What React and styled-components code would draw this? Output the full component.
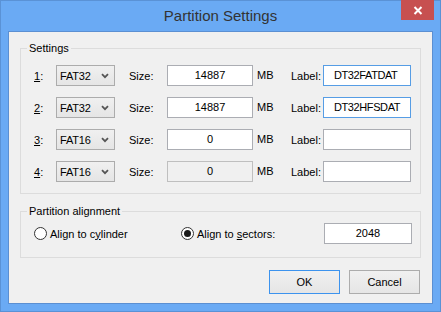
import React from 'react';
import styled, { createGlobalStyle } from 'styled-components';

const GlobalStyle = createGlobalStyle`
  html, body {
    margin: 0;
    padding: 0;
    background: #ffffff;
  }
  body {
    font-family: "Liberation Sans", Arial, sans-serif;
    font-size: 11px;
    color: #000;
  }
`;

const partitions = [
  { id: '1', fs: 'FAT32', size: '14887', label: 'DT32FATDAT', active: true },
  { id: '2', fs: 'FAT32', size: '14887', label: 'DT32HFSDAT', active: true },
  { id: '3', fs: 'FAT16', size: '0', label: '' },
  { id: '4', fs: 'FAT16', size: '0', label: '', disabled: true },
];

const Chevron = () => (
  <svg width="8" height="6" viewBox="0 0 8 6">
    <path d="M1 1.2 L4 4.2 L7 1.2" fill="none" stroke="#555" strokeWidth="1.8" />
  </svg>
);

const CloseGlyph = () => (
  <svg width="10" height="9" viewBox="0 0 10 9">
    <path d="M1.5 1 L8.5 8 M8.5 1 L1.5 8" stroke="#fff" strokeWidth="2" />
  </svg>
);

const App = () => (
  <>
    <GlobalStyle />
    <Window>
      <TitleBar>
        <span />
        <Title>Partition Settings</Title>
        <CloseCell>
          <CloseButton>
            <CloseGlyph />
          </CloseButton>
        </CloseCell>
      </TitleBar>
      <Client>
        <Group $pt="10px" $pb="11px">
          <Legend>Settings</Legend>
          <Rows>
            {partitions.map((p) => (
              <Row key={p.id}>
                <Cell $w="22px">
                  <u>{p.id}</u>:
                </Cell>
                <Combo>
                  <span>{p.fs}</span>
                  <Chevron />
                </Combo>
                <Cell $w="38px" $ml="14px">Size:</Cell>
                <Field $w="86px" $align="center" $disabled={p.disabled}>
                  {p.size}
                </Field>
                <Cell $w="34px" $ml="4px" $up>MB</Cell>
                <Cell $w="32px">Label:</Cell>
                <Field $w="88px" $active={p.active} $tight>
                  {p.label}
                </Field>
              </Row>
            ))}
          </Rows>
        </Group>
        <Group $pt="5px" $pb="13px" $mt="11px">
          <Legend>Partition alignment</Legend>
          <AlignRow>
            <Radio $w="147px">
              <RadioDot />
              <span>
                Align to c<u>y</u>linder
              </span>
            </Radio>
            <Radio $w="143px">
              <RadioDot $checked />
              <span>
                Align to <u>s</u>ectors:
              </span>
            </Radio>
            <Field $w="88px" $align="center">2048</Field>
          </AlignRow>
        </Group>
        <Buttons>
          <Button $default>OK</Button>
          <Button>Cancel</Button>
        </Buttons>
      </Client>
    </Window>
  </>
);

export default App;

const Window = styled.div`
  width: 441px;
  height: 312px;
  box-sizing: border-box;
  background: #6aaaf4;
  border: 1px solid #5a92d6;
  display: flex;
  flex-direction: column;
`;

const TitleBar = styled.div`
  height: 30px;
  display: grid;
  grid-template-columns: 1fr auto 1fr;
  align-items: start;
`;

const Title = styled.div`
  font-family: "Segoe UI", "Liberation Sans", Arial, sans-serif;
  font-size: 15px;
  color: #333;
  padding-top: 6px;
`;

const CloseCell = styled.div`
  display: flex;
  justify-content: flex-end;
  padding-right: 6px;
`;

const CloseButton = styled.div`
  width: 33px;
  height: 20px;
  margin-top: -1px;
  background: #c75050;
  display: flex;
  align-items: center;
  justify-content: center;
`;

const Client = styled.div`
  flex: 1;
  margin: 0 7px 7px 7px;
  background: #f0f0f0;
  border: 1px solid #5b8fd2;
  padding: 10px 11px 0 11px;
  display: flex;
  flex-direction: column;
`;

const Group = styled.fieldset`
  margin: ${({ $mt }) => $mt || '0'} 0 0 0;
  padding: ${({ $pt }) => $pt} 0 ${({ $pb }) => $pb} 13px;
  border: 1px solid #dcdcdc;
  min-width: 0;
`;

const Legend = styled.legend`
  margin-left: -7px;
  padding: 0 2px;
  line-height: 13px;
`;

const Rows = styled.div`
  display: flex;
  flex-direction: column;
  gap: 11px;
`;

const Row = styled.div`
  display: flex;
  align-items: center;
  height: 21px;
`;

const Cell = styled.div`
  width: ${({ $w }) => $w};
  margin-left: ${({ $ml }) => $ml || '0'};
  flex-shrink: 0;
  position: relative;
  top: ${({ $up }) => ($up ? '-1px' : '0')};
`;

const Combo = styled.div`
  width: 59px;
  height: 21px;
  box-sizing: border-box;
  border: 1px solid #acacac;
  background: linear-gradient(#f0f0f0, #e5e5e5);
  display: flex;
  align-items: center;
  justify-content: space-between;
  padding: 0 5px 0 3px;
  letter-spacing: -0.2px;
`;

const Field = styled.div`
  width: ${({ $w }) => $w};
  height: 21px;
  box-sizing: border-box;
  flex-shrink: 0;
  border: 1px solid
    ${({ $active, $disabled }) => ($active ? '#569de5' : $disabled ? '#bfbfbf' : '#abadb3')};
  background: ${({ $disabled }) => ($disabled ? '#f0f0f0' : '#fff')};
  display: flex;
  align-items: center;
  justify-content: ${({ $align }) => ($align === 'center' ? 'center' : 'flex-start')};
  padding: 0 0 0 ${({ $tight }) => ($tight ? '10px' : '0')};
  letter-spacing: ${({ $tight }) => ($tight ? '-0.4px' : '0')};
  line-height: 1;
`;

const AlignRow = styled.div`
  display: flex;
  align-items: center;
  height: 21px;
`;

const Radio = styled.div`
  width: ${({ $w }) => $w};
  display: flex;
  align-items: center;
  gap: 3px;
`;

const RadioDot = styled.span`
  width: 13px;
  height: 13px;
  box-sizing: border-box;
  border-radius: 50%;
  border: 1px solid #333;
  background: #fff;
  display: flex;
  align-items: center;
  justify-content: center;

  &::after {
    content: '';
    display: ${({ $checked }) => ($checked ? 'block' : 'none')};
    width: 7px;
    height: 7px;
    border-radius: 50%;
    background: #1a1a1a;
  }
`;

const Buttons = styled.div`
  display: flex;
  justify-content: flex-end;
  gap: 9px;
  margin-top: 12px;
  padding-right: 1px;
`;

const Button = styled.div`
  width: 71px;
  height: 24px;
  box-sizing: border-box;
  border: 1px solid ${({ $default }) => ($default ? '#3c93ee' : '#acacac')};
  background: linear-gradient(#f0f0f0, #e5e5e5);
  display: flex;
  align-items: center;
  justify-content: center;
`;
